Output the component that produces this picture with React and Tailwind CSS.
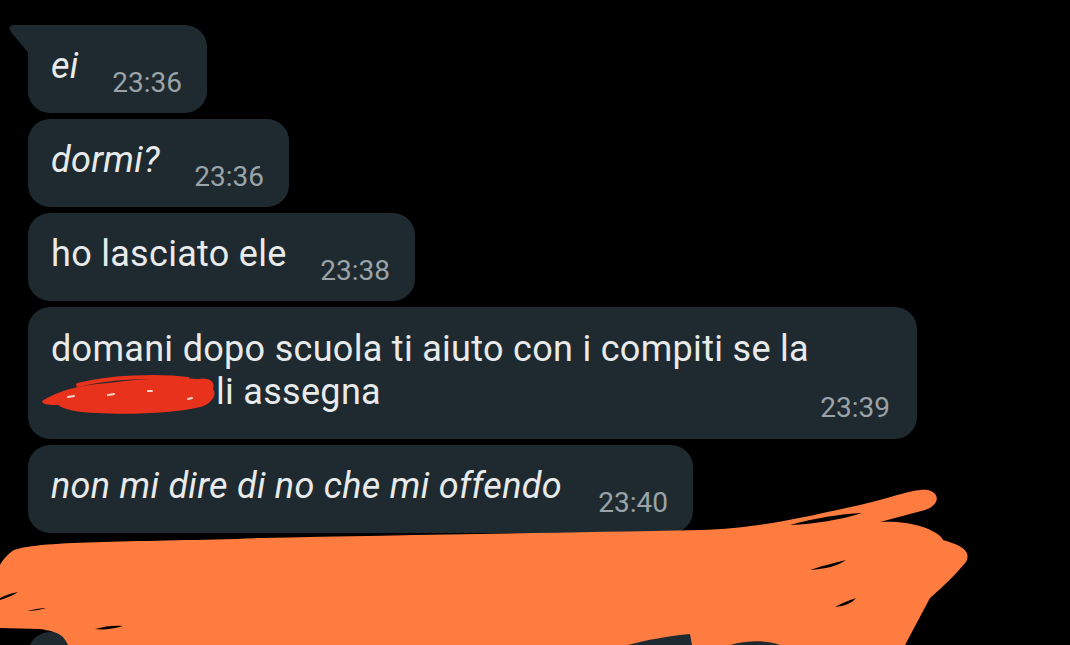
import React from 'react';

const messages = [
  { text: 'ei', time: '23:36', italic: true, w: 'w-[179px]' },
  { text: 'dormi?', time: '23:36', italic: true, w: 'w-[261px]' },
  { text: 'ho lasciato ele', time: '23:38', italic: false, w: 'w-[387px]' },
];

const Bubble = ({ text, time, italic, w, tail }) => (
  <div className={`relative ${w} h-[88px] rounded-[22px] bg-[#1f2a30] flex justify-between pl-[23px] pr-[25px] pt-[21px] ${tail ? 'rounded-tl-none' : ''}`}>
    {tail && (
      <svg className="absolute -left-[20px] top-0" width="22" height="32" viewBox="0 0 22 32">
        <path d="M22 0 L5 0 Q-1 1 3 7 L22 30 Z" fill="#1f2a30" />
      </svg>
    )}
    <span className={`text-[36px] leading-[40px] tracking-[0.3px] whitespace-nowrap text-[#e8eaeb] ${italic ? 'italic' : ''}`}>{text}</span>
    <span className="mt-[22px] text-[28px] leading-[30px] text-[#9aa3a8]">{time}</span>
  </div>
);

const App = () => {
  return (
    <div className="relative w-[1070px] h-[645px] overflow-hidden bg-black" style={{ fontFamily: 'Roboto, "Noto Sans", sans-serif' }}>
      <div className="flex flex-col gap-[6px] pt-[25px] pl-[28px]">
        {messages.map((m, i) => (
          <Bubble key={i} {...m} tail={i === 0} />
        ))}

        <div className="relative w-[889px] h-[132px] rounded-[22px] bg-[#1f2a30] flex flex-col pl-[23px] pr-[27px] pt-[21px]">
          <p className="text-[36px] leading-[43px] tracking-[0.3px] whitespace-nowrap text-[#e8eaeb]">
            domani dopo scuola ti aiuto con i compiti se la
            <br />
            <span className="inline-block w-[165px]"></span>li assegna
          </p>
          <span className="self-end -mt-[21px] text-[28px] leading-[30px] text-[#9aa3a8]">23:39</span>
          {/* red scribble over the name */}
          <svg className="absolute left-[10px] top-[64px]" width="190" height="46" viewBox="0 0 190 46">
            <path
              d="M4 30 C 20 20, 40 14, 70 12 C 100 8, 130 6, 160 8 C 170 6, 178 10, 175 18 C 180 24, 172 34, 162 36 C 140 42, 90 44, 60 42 C 40 42, 25 38, 20 34 C 12 34, 4 34, 4 30 Z"
              fill="#e8321c"
            />
            <path d="M40 14 C 70 6, 120 4, 150 8" stroke="#e8321c" strokeWidth="4" fill="none" strokeLinecap="round" />
            <path d="M30 26 L 36 25 M 70 24 L 76 23 M 110 20 L 114 20 M 150 28 L 154 27" stroke="#f4d6cf" strokeWidth="2" strokeLinecap="round" />
          </svg>
        </div>

        <Bubble text="non mi dire di no che mi offendo" time="23:40" italic w="w-[665px]" />

        <div className="w-[880px] h-[100px] mt-[93px] rounded-[22px] bg-[#1f2a30]"></div>
      </div>

      {/* orange scribble covering the last message */}
      <svg className="absolute left-0 top-0" width="1070" height="645" viewBox="0 0 1070 645">
        <path
          d="M14 550 C 40 540, 150 542, 260 538 C 400 535, 560 533, 700 530 C 760 528, 800 518, 860 505 C 890 498, 915 488, 928 490 C 942 494, 938 506, 925 510 L 880 522 C 915 520, 940 532, 943 540 C 960 545, 972 550, 966 562 C 955 575, 945 585, 930 598 L 905 645 L 780 645 C 770 641, 750 639, 730 645 L 692 645 L 690 634 C 670 636, 645 640, 628 645 L 68 645 C 64 636, 60 632, 40 629 L 0 628 L 0 565 C 4 558, 8 554, 14 550 Z"
          fill="#ff7c40"
        />
        <path d="M790 525 C 815 518, 840 514, 862 513 C 840 520, 815 524, 790 525 Z" fill="#000" />
        <path d="M810 570 C 825 565, 838 562, 846 560 C 838 566, 825 569, 810 570 Z" fill="#000" />
        <path d="M835 607 C 842 603, 850 600, 856 598 C 852 603, 845 606, 835 607 Z" fill="#000" />
        <path d="M0 598 C 6 595, 12 593, 18 592 C 12 596, 6 598, 0 600 Z" fill="#000" />
        <path d="M95 629 C 105 626, 115 625, 123 626 C 113 629, 104 630, 95 629 Z" fill="#000" />
        <path d="M27 611 C 35 609, 42 608, 46 608 C 40 610, 33 611, 27 611 Z" fill="#000" />
      </svg>
    </div>
  );
};

export default App;
